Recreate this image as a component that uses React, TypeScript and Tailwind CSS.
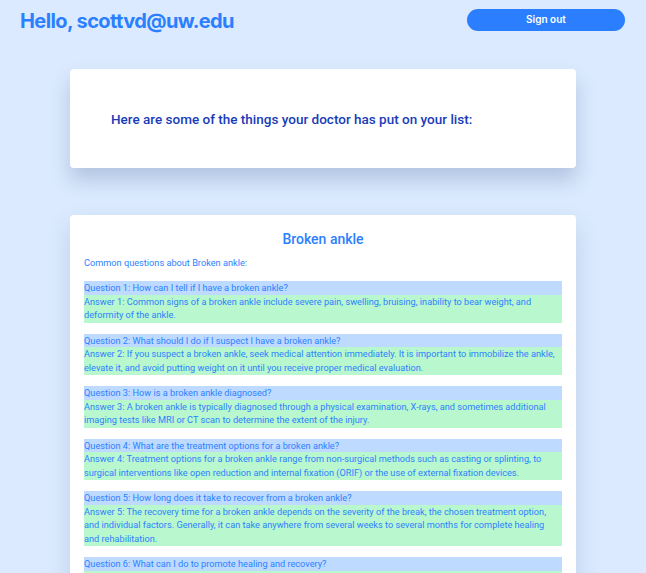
const faqs = [
  {
    q: 'How can I tell if I have a broken ankle?',
    a: 'Common signs of a broken ankle include severe pain, swelling, bruising, inability to bear weight, and deformity of the ankle.',
  },
  {
    q: 'What should I do if I suspect I have a broken ankle?',
    a: 'If you suspect a broken ankle, seek medical attention immediately. It is important to immobilize the ankle, elevate it, and avoid putting weight on it until you receive proper medical evaluation.',
  },
  {
    q: 'How is a broken ankle diagnosed?',
    a: 'A broken ankle is typically diagnosed through a physical examination, X-rays, and sometimes additional imaging tests like MRI or CT scan to determine the extent of the injury.',
  },
  {
    q: 'What are the treatment options for a broken ankle?',
    a: 'Treatment options for a broken ankle range from non-surgical methods such as casting or splinting, to surgical interventions like open reduction and internal fixation (ORIF) or the use of external fixation devices.',
  },
  {
    q: 'How long does it take to recover from a broken ankle?',
    a: 'The recovery time for a broken ankle depends on the severity of the break, the chosen treatment option, and individual factors. Generally, it can take anywhere from several weeks to several months for complete healing and rehabilitation.',
  },
  {
    q: 'What can I do to promote healing and recovery?',
    a: 'Follow your doctor’s instructions, rest and elevate the ankle, attend physical therapy sessions, and gradually return to weight-bearing activities as advised.',
  },
];

export default function App() {
  return (
    <div className="min-h-screen bg-blue-100 font-['Roboto',Arial,sans-serif]">
      <header className="flex items-center justify-between pl-5 pr-[21px] pt-2">
        <h1 className="mt-[3px] font-['Inter',sans-serif] text-[20px] font-bold leading-none tracking-[-0.03em] text-blue-500">
          Hello, scottvd@uw.edu
        </h1>
        <button className="h-[22px] w-[158px] rounded-full bg-blue-500 font-['Inter',sans-serif] text-[10px] font-semibold text-white">
          Sign out
        </button>
      </header>

      <main className="mx-auto mt-[38px] flex w-[506px] flex-col gap-[47px] pb-10">
        <section className="flex h-[99px] items-center rounded-sm bg-white pl-[41px] shadow-[0_12px_20px_rgba(30,64,120,0.22)]">
          <p className="mt-[2px] text-[13.5px] font-medium text-blue-800">
            Here are some of the things your doctor has put on your list:
          </p>
        </section>

        <section className="rounded-sm bg-white px-[14px] pt-[14px] pb-4 shadow-[0_10px_25px_rgba(30,64,120,0.15)]">
          <h2 className="text-center text-[14px] font-medium leading-5 text-blue-500">
            Broken ankle
          </h2>
          <p className="mt-[7px] text-[9.2px] leading-[14px] text-blue-500">
            Common questions about Broken ankle:
          </p>
          <div className="mt-[11px] flex flex-col gap-[11px]">
            {faqs.map((f, i) => (
              <div key={i} className="text-[9.2px] leading-[13.5px] text-blue-500">
                <div className="bg-blue-200">
                  Question {i + 1}: {f.q}
                </div>
                <div className="bg-green-200 pr-[3px] pb-[1px]">
                  Answer {i + 1}: {f.a}
                </div>
              </div>
            ))}
          </div>
        </section>
      </main>
    </div>
  );
}
